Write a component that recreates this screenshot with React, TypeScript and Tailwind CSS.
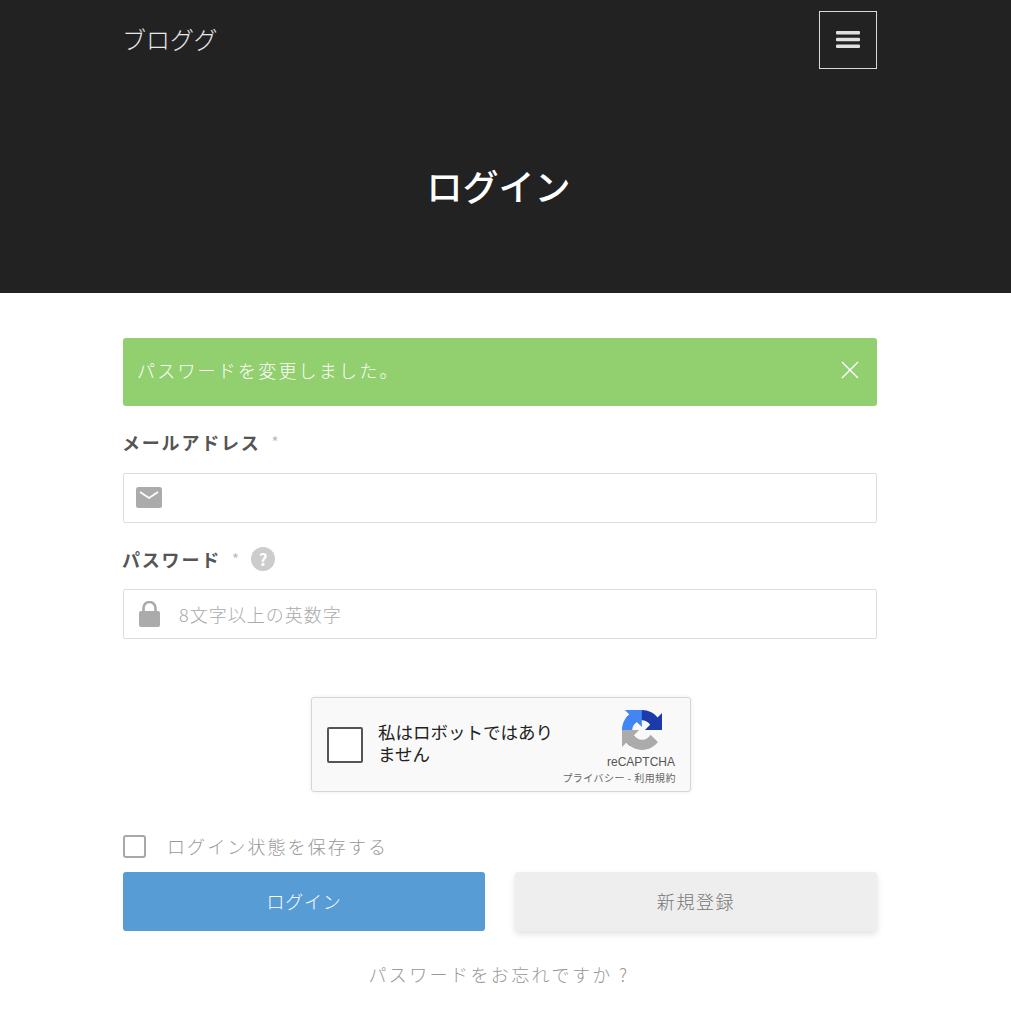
const jp = "font-['Noto_Sans_CJK_JP','Noto_Sans',sans-serif]";

function App() {
  return (
    <div className={`${jp} w-[1011px] h-[1024px] overflow-hidden bg-white text-[#555]`}>
      <header className="h-[293px] bg-[#222222] pl-[123px] pr-[134px] pt-[11px] flex flex-col">
        <div className="flex items-start justify-between h-[58px]">
          <div className="text-[24px] leading-[56px] -ml-[1px] text-[#e8e8e8] font-light">ブロググ</div>
          <button className="w-[58px] h-[58px] border border-[#d8d8d8] flex items-center justify-center">
            <svg width="24" height="18" viewBox="0 0 24 18" fill="#e0e0e0"><rect x="0" y="0" width="24" height="3.4" rx="1" /><rect x="0" y="6.8" width="24" height="3.4" rx="1" /><rect x="0" y="13.6" width="24" height="3.4" rx="1" /></svg>
          </button>
        </div>
        <h1 className="mt-[91px] text-center text-[36px] leading-[50px] font-medium text-white pr-[3px]">ログイン</h1>
      </header>

      <main className="pl-[123px] pr-[134px] pt-[45px]">
        <div className="h-[68px] rounded-[3px] bg-[#92cf6e] pl-[14px] pr-[18px] pb-[4px] flex items-center justify-between text-white">
          <span className="text-[18px] tracking-[2.2px] font-light">パスワードを変更しました。</span>
          <svg width="18" height="18" viewBox="0 0 18 18" stroke="#fff" strokeWidth="1.4" fill="none"><path d="M1 1l16 16M17 1L1 17" /></svg>
        </div>

        <div className="mt-[21px] h-[30px] flex items-center">
          <span className="text-[18px] font-bold tracking-[1.8px] text-[#555] -ml-[1px]">メールアドレス</span>
          <span className="ml-[11px] text-[15px] text-[#bbb]">*</span>
        </div>
        <div className="mt-[16px] h-[50px] border border-[#dddddd] rounded-[2px] flex items-center pl-[12px] pb-[2px]">
          <svg width="26" height="21" viewBox="0 0 26 21">
            <rect x="0" y="0" width="26" height="21" rx="2.5" fill="#ababab" />
            <path d="M4 5l9 6 9-6" fill="none" stroke="#fff" strokeWidth="1.8" />
          </svg>
        </div>

        <div className="mt-[21px] h-[30px] flex items-center">
          <span className="text-[18px] font-bold tracking-[1.8px] text-[#555] -ml-[1px]">パスワード</span>
          <span className="ml-[11px] text-[15px] text-[#bbb]">*</span>
          <span className="ml-[12px] w-[24px] h-[24px] rounded-full bg-[#cccccc] text-white text-[17px] font-bold leading-[24px] text-center">?</span>
        </div>
        <div className="mt-[15px] h-[50px] border border-[#dddddd] rounded-[2px] flex items-center pl-[14px]">
          <svg width="23" height="26" viewBox="0 0 23 26">
            <rect x="1" y="10" width="21" height="16" rx="2" fill="#ababab" />
            <path d="M5.5 11V7a6 6 0 0 1 12 0v4" fill="none" stroke="#ababab" strokeWidth="2.6" />
          </svg>
          <span className="ml-[18px] text-[18px] text-[#aaaaaa] tracking-[1px] font-light">8文字以上の英数字</span>
        </div>

        <div className="mt-[58px] flex justify-center pl-[2px]">
          <div className="relative w-[380px] h-[95px] bg-[#f9f9f9] border border-[#d6d6d6] rounded-[3px] shadow-[0_0_4px_rgba(0,0,0,0.08)] flex items-center pl-[15px]">
            <div className="w-[36px] h-[36px] bg-white border-[2px] border-[#555] rounded-[2px] shrink-0" />
            <div className="ml-[15px] w-[178px] text-[17.5px] leading-[22px] text-[#222] pb-[4px]">私はロボットではありません</div>
            <div className="absolute top-[12px] right-[28px]">
              <svg width="40" height="40" viewBox="0 0 64 64">
                <path d="M64 31.955l-.033-1.37V4.687l-7.16 7.16C50.948 4.674 42.033.093 32.05.093c-10.4 0-19.622 4.96-25.458 12.64l11.736 11.86a15.55 15.55 0 0 1 4.754-5.334c2.05-1.6 4.952-2.906 8.968-2.906.485 0 .86.057 1.135.163 4.976.393 9.288 3.14 11.828 7.125l-8.307 8.307c10.522-.04 22.4-.066 27.295.005" fill="#1c3aa9" />
                <path d="M31.862.094l-1.37.033H4.594l7.16 7.16C4.58 13.147 0 22.06 0 32.046c0 10.4 4.96 19.622 12.64 25.458l11.86-11.736a15.55 15.55 0 0 1-5.334-4.754c-1.6-2.05-2.906-4.952-2.906-8.968 0-.485.057-.86.163-1.135.393-4.976 3.14-9.288 7.124-11.828l8.307 8.307c-.04-10.522-.066-22.4.005-27.295" fill="#4285f4" />
                <path d="M.001 32.045l.033 1.37v25.898l7.16-7.16c5.86 7.173 14.774 11.754 24.76 11.754 10.4 0 19.622-4.96 25.458-12.64L45.677 39.407a15.55 15.55 0 0 1-4.754 5.334c-2.05 1.6-4.952 2.906-8.968 2.906-.485 0-.86-.057-1.135-.163-4.976-.393-9.288-3.14-11.828-7.125l8.307-8.307c-10.522.04-22.4.066-27.295-.005" fill="#ababab" />
              </svg>
            </div>
            <div className="absolute top-[57px] right-[15px] text-[12px] leading-[14px] text-[#555] font-['Liberation_Sans',sans-serif]">reCAPTCHA</div>
            <div className="absolute top-[74px] right-[14px] text-[10px] leading-[12px] tracking-[0.45px] text-[#666]">プライバシー - 利用規約</div>
          </div>
        </div>

        <div className="mt-[42px] h-[24px] flex items-center">
          <div className="w-[23px] h-[23px] border-[2px] border-[#a8a8a8] rounded-[3px]" />
          <span className="ml-[21px] text-[18px] tracking-[2.1px] text-[#999999] font-light">ログイン状態を保存する</span>
        </div>

        <div className="mt-[14px] flex justify-between">
          <button className="w-[362px] h-[59px] rounded-[3px] bg-[#589cd6] text-white text-[18px] tracking-[0.8px] font-light">ログイン</button>
          <button className="w-[362px] h-[59px] rounded-[3px] bg-[#eeeeee] text-[#777] text-[18px] tracking-[1.6px] font-light shadow-[0_3px_6px_rgba(0,0,0,0.12)]">新規登録</button>
        </div>

        <div className="mt-[30px] text-center text-[18px] tracking-[2.4px] text-[#999999] font-light pr-[2px]">パスワードをお忘れですか ?</div>
      </main>
    </div>
  );
}

export default App;
